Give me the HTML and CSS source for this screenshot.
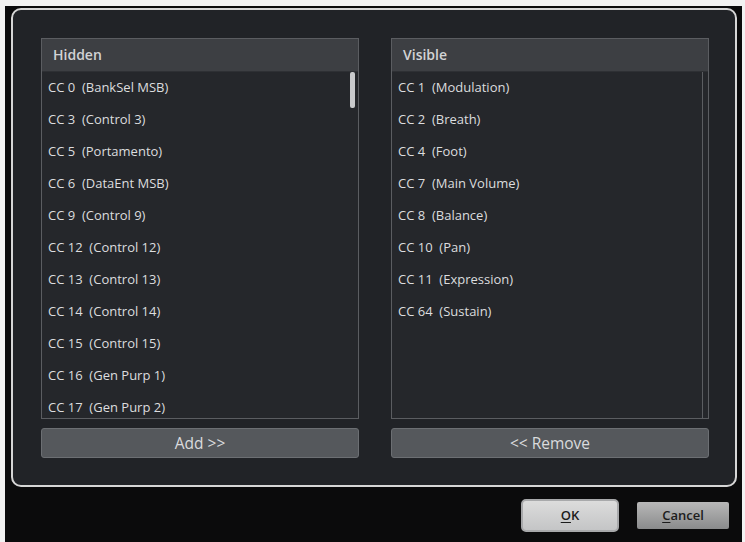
FILE: index.html
```html
<!DOCTYPE html>
<html>
<head>
<meta charset="utf-8">
<link rel="stylesheet" href="styles.css">
</head>
<body>
<div class="screen">
  <div class="panel">
    <div class="column">
      <div class="listbox">
        <div class="list-header">Hidden</div>
        <div class="list-body">
          <div class="item">CC 0&nbsp; (BankSel MSB)</div>
          <div class="item">CC 3&nbsp; (Control 3)</div>
          <div class="item">CC 5&nbsp; (Portamento)</div>
          <div class="item">CC 6&nbsp; (DataEnt MSB)</div>
          <div class="item">CC 9&nbsp; (Control 9)</div>
          <div class="item">CC 12&nbsp; (Control 12)</div>
          <div class="item">CC 13&nbsp; (Control 13)</div>
          <div class="item">CC 14&nbsp; (Control 14)</div>
          <div class="item">CC 15&nbsp; (Control 15)</div>
          <div class="item">CC 16&nbsp; (Gen Purp 1)</div>
          <div class="item">CC 17&nbsp; (Gen Purp 2)</div>
          <div class="thumb"></div>
        </div>
      </div>
      <div class="btn">Add &gt;&gt;</div>
    </div>
    <div class="column">
      <div class="listbox">
        <div class="list-header">Visible</div>
        <div class="list-body track">
          <div class="item">CC 1&nbsp; (Modulation)</div>
          <div class="item">CC 2&nbsp; (Breath)</div>
          <div class="item">CC 4&nbsp; (Foot)</div>
          <div class="item">CC 7&nbsp; (Main Volume)</div>
          <div class="item">CC 8&nbsp; (Balance)</div>
          <div class="item">CC 10&nbsp; (Pan)</div>
          <div class="item">CC 11&nbsp; (Expression)</div>
          <div class="item">CC 64&nbsp; (Sustain)</div>
        </div>
      </div>
      <div class="btn">&lt;&lt; Remove</div>
    </div>
  </div>
  <div class="footer">
    <div class="dlg-btn ok"><u>O</u>K</div>
    <div class="dlg-btn cancel"><u>C</u>ancel</div>
  </div>
</div>
</body>
</html>
```
FILE: styles.css
```css
html, body {
  margin: 0;
  padding: 0;
  background: #f2f2f2;
  width: 745px;
  height: 542px;
  overflow: hidden;
}
.screen {
  margin: 6px 0 0 5px;
  width: 737px;
  height: 536px;
  background: #0b0b0c;
  font-family: "Open Sans", "Noto Sans", sans-serif;
  box-sizing: border-box;
  padding: 2px 5px 0 6px;
}
.panel {
  width: 726px;
  height: 479px;
  box-sizing: border-box;
  border: 2px solid #d6d6d6;
  border-radius: 10px;
  background: #212327;
  padding: 28px 26px 0 28px;
  display: flex;
  gap: 32px;
}
.column {
  width: 319px;
  display: flex;
  flex-direction: column;
  gap: 9px;
}
.listbox {
  height: 381px;
  box-sizing: border-box;
  border: 1px solid #5b5d61;
  background: #25272b;
  display: flex;
  flex-direction: column;
  overflow: hidden;
}
.list-header {
  height: 32px;
  flex: none;
  background: #3d3f43;
  color: #d2d3d5;
  font-size: 14px;
  font-weight: 600;
  line-height: 32px;
  padding-left: 11px;
  border-bottom: 1px solid #2e3034;
}
.list-body {
  position: relative;
  flex: 1;
  overflow: hidden;
}
.track {
  border-right: 1px solid #5b5d61;
  margin-right: 5px;
}
.item {
  height: 32px;
  line-height: 31px;
  padding-left: 6px;
  font-size: 13px;
  color: #dcdddf;
  white-space: nowrap;
}
.thumb {
  position: absolute;
  right: 3px;
  top: 0;
  width: 5px;
  height: 36px;
  border-radius: 2px;
  background: #c9cacc;
}
.btn {
  height: 30px;
  box-sizing: border-box;
  border: 1px solid #6c6f73;
  border-radius: 3px;
  background: #55585c;
  color: #dadbdd;
  font-size: 15.5px;
  line-height: 28px;
  text-align: center;
}
.footer {
  display: flex;
  justify-content: flex-end;
  align-items: center;
  gap: 18px;
  padding: 12px 8px 0 0;
}
.dlg-btn {
  box-sizing: border-box;
  color: #1c1c1c;
  font-size: 13px;
  font-weight: 600;
  text-align: center;
}
.dlg-btn u {
  text-underline-offset: 2px;
}
.ok {
  width: 98px;
  height: 33px;
  line-height: 29px;
  border: 2px solid #a8a9ab;
  border-radius: 5px;
  background: linear-gradient(#dcdcdc, #c4c5c6);
}
.cancel {
  width: 92px;
  height: 27px;
  line-height: 27px;
  border-radius: 2px;
  background: linear-gradient(#b8b8b8, #8a8b8c);
}
```
